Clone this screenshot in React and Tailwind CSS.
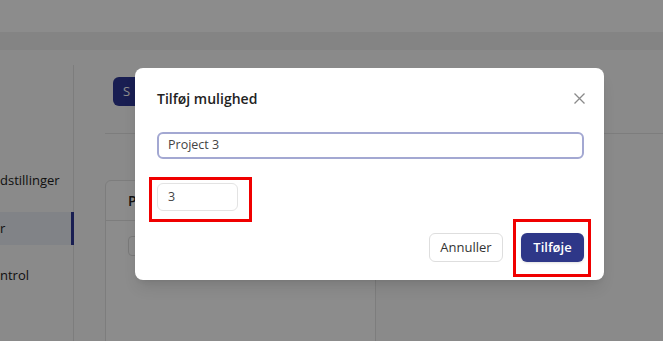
export default function App() {
  return (
    <div className="relative w-[663px] h-[341px] overflow-hidden bg-[#fbfbfb] font-['Open_Sans',sans-serif]">
      <div className="h-[32px] bg-white" />
      <div className="h-[18px] bg-[#f1f1f1]" />
      <div className="flex h-[291px] pt-[15px]">
        <aside className="w-[74px] shrink-0 border-r border-[#e4e4e4] flex flex-col pt-[100px] text-[13px] text-[#222]">
          <div className="h-[32px] flex items-center whitespace-nowrap">dstillinger</div>
          <div className="h-[33px] mt-[15px] flex items-center bg-[#eceef6] border-r-[3px] border-[#2f3895] -mr-px">r</div>
          <div className="h-[32px] mt-[15px] flex items-center">ntrol</div>
        </aside>
        <main className="flex-1 min-w-0 pl-[31px] pt-[12px]">
          <div className="ml-[8px] h-[29px] w-[110px] rounded-md bg-[#2f3895] text-white text-[13px] flex items-center pl-[10px]">S</div>
          <div className="mt-[27px] border-t border-[#e4e4e4]" />
          <div className="mt-[46px] w-[271px] h-[200px] border border-[#e4e4e4] rounded-md bg-white">
            <div className="h-[40px] flex items-center px-[22px] text-[14px] font-semibold text-[#222] border-b border-[#e4e4e4]">P</div>
            <div className="mt-[15px] ml-[22px] h-[20px] w-[60px] rounded border border-[#ddd]" />
          </div>
        </main>
      </div>
      <div className="absolute inset-0 bg-black/45" />
      <div className="absolute left-[135px] top-[68px] w-[469px] rounded-lg bg-white pl-[22px] pr-[20px] pt-[20px] pb-[18px] shadow-lg">
        <div className="flex items-center justify-between h-[20px]">
          <h2 className="text-[14px] font-semibold text-[#222]">Tilføj mulighed</h2>
          <svg width="11" height="11" viewBox="0 0 11 11" className="mr-[-1px]" fill="none" stroke="#8a8a8a" strokeWidth="1.3">
            <path d="M0.5 0.5 L10.5 10.5 M10.5 0.5 L0.5 10.5" />
          </svg>
        </div>
        <div className="mt-[24px] h-[27px] rounded-md border-2 border-[#a3a8d2] flex items-center pl-[9px] text-[12.5px] text-[#444]">
          Project 3
        </div>
        <div className="relative mt-[24px] w-[81px]">
          <div className="h-[28px] rounded-md border border-[#e3e3e3] flex items-center pl-[10px] text-[12.5px] text-[#444]">3</div>
          <div className="absolute left-[-8px] top-[-6px] w-[103px] h-[45px] border-[3px] border-[#f00000]" />
        </div>
        <div className="mt-[22px] flex justify-end gap-[18px]">
          <button className="h-[29px] w-[74px] rounded-md border border-[#dedede] bg-white text-[13px] text-[#333]">Annuller</button>
          <div className="relative">
            <button className="h-[29px] w-[63px] rounded-md bg-[#2e3788] text-[13px] font-semibold text-white shadow-sm">Tilføje</button>
            <div className="absolute left-[-8px] top-[-14px] w-[78px] h-[58px] border-[3px] border-[#f00000]" />
          </div>
        </div>
      </div>
    </div>
  );
}
